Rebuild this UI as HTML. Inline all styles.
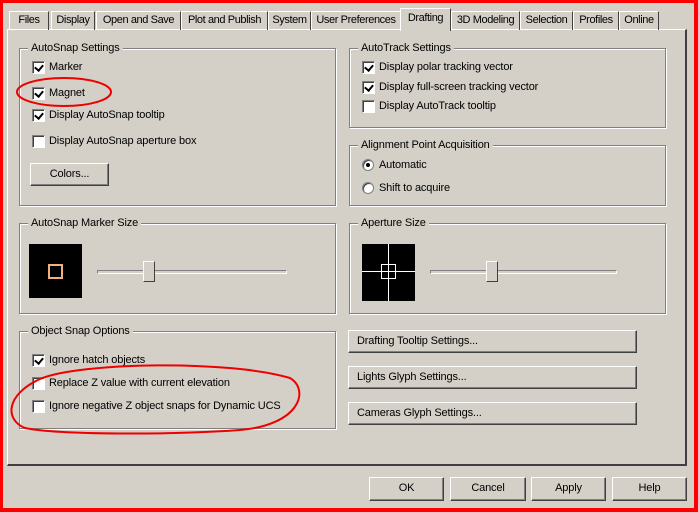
<!DOCTYPE html>
<html><head><style>
*{margin:0;padding:0;box-sizing:border-box}
body{width:698px;height:512px;background:#d4d0c8;position:relative;overflow:hidden;font-family:"Liberation Sans",sans-serif;font-size:11px;letter-spacing:-0.15px;color:#000}
.a{position:absolute}
.frame{position:absolute;left:0;top:0;width:698px;height:512px;border:3px solid #f00;border-bottom-width:4px;border-right-width:4px;pointer-events:none}
.tab{position:absolute;top:11px;height:19px;border-top:1px solid #fff;border-left:1px solid #fff;border-right:1px solid #404040;line-height:16px;text-align:center;white-space:nowrap;font-size:11px;letter-spacing:-0.4px;overflow:hidden}
.panel{position:absolute;left:7px;top:29px;width:680px;height:437px;border-top:1px solid #fff;border-left:1px solid #fff;border-right:2px solid #404040;border-bottom:2px solid #404040}
.grp{position:absolute;border:1px solid #808080;box-shadow:1px 1px 0 #fff inset,1px 1px 0 #fff}
.gt{position:absolute;top:-8px;left:8px;background:#d4d0c8;padding:0 3px;line-height:14px;white-space:nowrap}
.cb{position:absolute;width:13px;height:13px;background:#fff;border-top:1px solid #808080;border-left:1px solid #808080;border-right:1px solid #fff;border-bottom:1px solid #fff;box-shadow:inset 1px 1px 0 #404040}
.cb.c::after{content:"";position:absolute;left:3px;top:1px;width:4px;height:6px;border-right:2px solid #000;border-bottom:2px solid #000;transform:rotate(40deg)}
.lb{position:absolute;white-space:nowrap;line-height:14px}
.btn{position:absolute;border-top:1px solid #fff;border-left:1px solid #fff;border-right:1px solid #404040;border-bottom:1px solid #404040;box-shadow:inset -1px -1px 0 #808080;line-height:20px;white-space:nowrap}
.rd{position:absolute;width:12px;height:12px;border-radius:50%;background:#fff;border:1px solid #808080;box-shadow:inset 1px 1px 0 #404040}
.rd.s::after{content:"";position:absolute;left:3px;top:3px;width:4px;height:4px;border-radius:50%;background:#000}
.track{position:absolute;height:4px;border-top:1px solid #808080;border-left:1px solid #808080;border-bottom:1px solid #fff;border-right:1px solid #fff;background:#d4d0c8}
.thumb{position:absolute;width:12px;height:21px;background:#d4d0c8;border-top:1px solid #fff;border-left:1px solid #fff;border-right:1px solid #404040;border-bottom:1px solid #404040}
</style></head><body>
<div class="panel"></div>
<div class="tab" style="left:9px;width:40px">Files</div>
<div class="tab" style="left:51px;width:44px">Display</div>
<div class="tab" style="left:96px;width:85px">Open and Save</div>
<div class="tab" style="left:181px;width:87px">Plot and Publish</div>
<div class="tab" style="left:268px;width:43px">System</div>
<div class="tab" style="left:311px;width:90px">User Preferences</div>
<div class="tab" style="left:400px;width:51px;top:8px;height:23px;background:#d4d0c8;line-height:19px">Drafting</div>
<div class="tab" style="left:451px;width:69px">3D Modeling</div>
<div class="tab" style="left:520px;width:53px">Selection</div>
<div class="tab" style="left:573px;width:46px">Profiles</div>
<div class="tab" style="left:619px;width:40px">Online</div>

<div class="grp" style="left:19px;top:48px;width:317px;height:158px"><span class="gt">AutoSnap Settings</span></div>
<div class="cb c" style="left:32px;top:61px"></div><div class="lb" style="left:49px;top:60px">Marker</div>
<div class="cb c" style="left:32px;top:87px"></div><div class="lb" style="left:49px;top:86px">Magnet</div>
<div class="cb c" style="left:32px;top:109px"></div><div class="lb" style="left:49px;top:108px">Display AutoSnap tooltip</div>
<div class="cb" style="left:32px;top:135px"></div><div class="lb" style="left:49px;top:134px">Display AutoSnap aperture box</div>
<div class="btn" style="left:30px;top:163px;width:79px;height:23px;text-align:center">Colors...</div>

<div class="grp" style="left:349px;top:48px;width:317px;height:80px"><span class="gt">AutoTrack Settings</span></div>
<div class="cb c" style="left:362px;top:61px"></div><div class="lb" style="left:379px;top:60px">Display polar tracking vector</div>
<div class="cb c" style="left:362px;top:81px"></div><div class="lb" style="left:379px;top:80px">Display full-screen tracking vector</div>
<div class="cb" style="left:362px;top:100px"></div><div class="lb" style="left:379px;top:99px">Display AutoTrack tooltip</div>

<div class="grp" style="left:349px;top:145px;width:317px;height:61px"><span class="gt">Alignment Point Acquisition</span></div>
<div class="rd s" style="left:362px;top:159px"></div><div class="lb" style="left:379px;top:158px">Automatic</div>
<div class="rd" style="left:362px;top:182px"></div><div class="lb" style="left:379px;top:181px">Shift to acquire</div>

<div class="grp" style="left:19px;top:223px;width:317px;height:91px"><span class="gt">AutoSnap Marker Size</span></div>
<div class="a" style="left:29px;top:244px;width:53px;height:54px;background:#000"></div>
<div class="a" style="left:48px;top:264px;width:15px;height:15px;border:2px solid #f0b080"></div>
<div class="track" style="left:97px;top:270px;width:190px"></div>
<div class="thumb" style="left:143px;top:261px"></div>

<div class="grp" style="left:349px;top:223px;width:317px;height:91px"><span class="gt">Aperture Size</span></div>
<div class="a" style="left:362px;top:244px;width:53px;height:57px;background:#000"></div>
<div class="a" style="left:362px;top:271px;width:53px;height:1px;background:#fff"></div>
<div class="a" style="left:388px;top:244px;width:1px;height:57px;background:#fff"></div>
<div class="a" style="left:381px;top:264px;width:15px;height:15px;border:1px solid #fff"></div>
<div class="track" style="left:430px;top:270px;width:187px"></div>
<div class="thumb" style="left:486px;top:261px"></div>

<div class="grp" style="left:19px;top:331px;width:317px;height:98px"><span class="gt">Object Snap Options</span></div>
<div class="cb c" style="left:32px;top:354px"></div><div class="lb" style="left:49px;top:353px">Ignore hatch objects</div>
<div class="cb" style="left:32px;top:377px"></div><div class="lb" style="left:49px;top:376px">Replace Z value with current elevation</div>
<div class="cb" style="left:32px;top:400px"></div><div class="lb" style="left:49px;top:399px">Ignore negative Z object snaps for Dynamic UCS</div>

<div class="btn" style="left:348px;top:330px;width:289px;height:23px;padding-left:8px">Drafting Tooltip Settings...</div>
<div class="btn" style="left:348px;top:366px;width:289px;height:23px;padding-left:8px">Lights Glyph Settings...</div>
<div class="btn" style="left:348px;top:402px;width:289px;height:23px;padding-left:8px">Cameras Glyph Settings...</div>

<div class="btn" style="left:369px;top:477px;width:75px;height:24px;text-align:center">OK</div>
<div class="btn" style="left:450px;top:477px;width:76px;height:24px;text-align:center">Cancel</div>
<div class="btn" style="left:531px;top:477px;width:75px;height:24px;text-align:center">Apply</div>
<div class="btn" style="left:612px;top:477px;width:75px;height:24px;text-align:center">Help</div>

<svg class="a" style="left:0;top:0" width="698" height="512">
<ellipse cx="64" cy="92" rx="47" ry="14" fill="none" stroke="#e00" stroke-width="2"/>
<path d="M40 379 C80 362 230 360 290 378 C310 390 300 425 240 430 C170 435 60 435 25 428 C5 420 5 395 40 379" fill="none" stroke="#e00" stroke-width="2"/>
<rect x="370" y="0" width="12" height="3" fill="#f0b000"/>
</svg>
<div class="frame"></div>
</body></html>
